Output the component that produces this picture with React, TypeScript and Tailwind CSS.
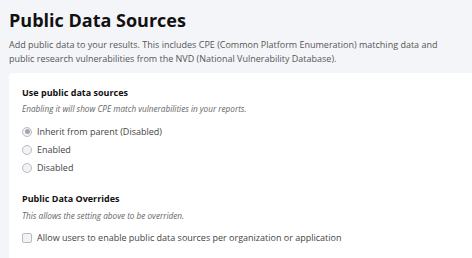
import { useState } from "react";

type Option = { value: string; label: string };

const options: Option[] = [
  { value: "inherit", label: "Inherit from parent (Disabled)" },
  { value: "enabled", label: "Enabled" },
  { value: "disabled", label: "Disabled" },
];

function Radio({ checked }: { checked: boolean }) {
  return (
    <span className="flex h-[10px] w-[10px] shrink-0 items-center justify-center rounded-full border border-[#b9bcc2] bg-[#f1f2f4]">
      {checked && <span className="h-[5px] w-[5px] rounded-full bg-[#a3a6ac]" />}
    </span>
  );
}

export default function App() {
  const [selected] = useState("inherit");

  return (
    <div
      className="h-[258px] w-[472px] overflow-hidden bg-[#f4f5f9] pl-[9px] pt-[7px] text-[#1f1f1f]"
      style={{ fontFamily: '"Open Sans", sans-serif' }}
    >
      <h1 className="text-[18px] font-bold leading-[26px] text-[#111]">Public Data Sources</h1>
      <p className="mt-[5px] text-[9px] leading-[14px] text-[#555]">
        Add public data to your results. This includes CPE (Common Platform Enumeration) matching data and
        <br />
        public research vulnerabilities from the NVD (National Vulnerability Database).
      </p>

      {/* Settings card */}
      <div className="mt-[7px] h-[200px] rounded-l-[4px] bg-white pl-[13px] pt-[14px]">
        <h2 className="text-[9px] font-bold leading-[12px] text-[#111]">Use public data sources</h2>
        <p className="mt-[4px] text-[8.2px] italic leading-[11px] text-[#666]">
          Enabling it will show CPE match vulnerabilities in your reports.
        </p>

        <div className="mt-[11px] flex flex-col gap-[5px]">
          {options.map((o) => (
            <label key={o.value} className="flex h-[13px] items-center gap-[5px] text-[9px] text-[#444]">
              <Radio checked={selected === o.value} />
              {o.label}
            </label>
          ))}
        </div>

        <h2 className="mt-[19px] text-[9px] font-bold leading-[12px] text-[#111]">Public Data Overrides</h2>
        <p className="mt-[5px] text-[8.2px] italic leading-[11px] text-[#666]">
          This allows the setting above to be overriden.
        </p>

        <label className="mt-[10px] flex h-[13px] items-center gap-[5px] text-[9px] text-[#444]">
          <span className="h-[10px] w-[10px] shrink-0 rounded-[2px] border border-[#b9bcc2] bg-[#f1f2f4]" />
          Allow users to enable public data sources per organization or application
        </label>
      </div>
    </div>
  );
}
